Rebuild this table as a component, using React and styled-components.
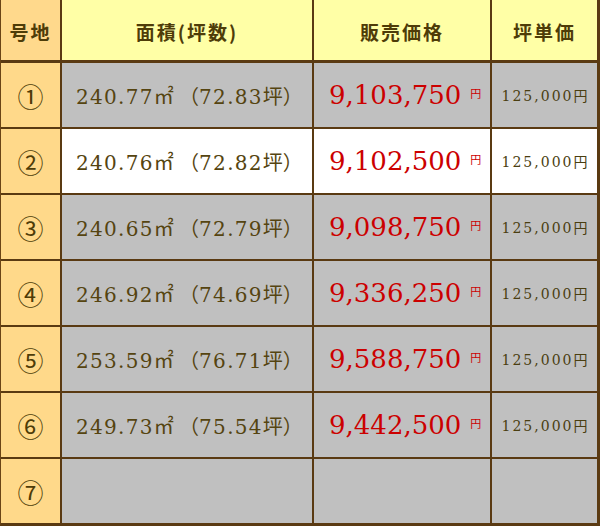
import styled, { createGlobalStyle } from "styled-components";

const GlobalStyle = createGlobalStyle`
  html, body {
    margin: 0;
    padding: 0;
    background: #ffffff;
  }
  body {
    font-family: "DejaVu Serif", "Noto Sans CJK JP", serif;
  }
`;

// 表全体（茶色の罫線は背景色と gap で出す）
const Table = styled.div`
  display: grid;
  grid-template-columns: 59px 250px 176px 105px;
  grid-template-rows: 61px repeat(7, 64px);
  column-gap: 2px;
  row-gap: 2px;
  width: 600px;
  box-sizing: border-box;
  background: #5a3a12;
  border-left: 1px solid #6a4416;
  border-right: 3px solid #5a3a12;
  border-bottom: 3px solid #5a3a12;
`;

// 見出しセル
const HeadCell = styled.div`
  height: 60px;
  display: flex;
  align-items: center;
  justify-content: center;
  background: ${(p) => (p.$lot ? "#ffd98c" : "#ffffa6")};
  color: #4e3c08;
  font-family: "Noto Sans CJK JP", sans-serif;
  font-weight: 700;
  font-size: 19px;
  letter-spacing: 2px;
  padding-top: 2px;
  box-sizing: border-box;
`;

// 号地セル
const LotCell = styled.div`
  display: flex;
  align-items: center;
  justify-content: center;
  background: #ffd98a;
  color: #4e3c08;
  font-family: "Noto Sans CJK JP", sans-serif;
  font-size: 26px;
`;

// データセル
const Cell = styled.div`
  display: flex;
  align-items: center;
  justify-content: ${(p) => p.$align || "flex-start"};
  background: ${(p) => (p.$white ? "#ffffff" : "#c0c0c0")};
  box-sizing: border-box;
  padding: ${(p) => p.$pad || "0"};
  color: #554410;
`;

const AreaText = styled.span`
  font-family: "DejaVu Serif", "Noto Sans CJK JP", serif;
  font-size: 20px;
  letter-spacing: 1.3px;
  white-space: nowrap;
`;

const Tsubo = styled.span`
  font-family: "Noto Sans CJK JP", sans-serif;
  font-size: 20px;
  letter-spacing: 0;
  margin-left: ${(p) => p.$gap || "0"};
`;

const Price = styled.span`
  font-family: "DejaVu Serif", serif;
  font-size: 26px;
  letter-spacing: 0;
  color: #cc0000;
  white-space: nowrap;
`;

const Yen = styled.span`
  font-family: "Noto Sans CJK JP", sans-serif;
  font-size: 11px;
  color: #cc0000;
  margin-left: 9px;
  position: relative;
  top: -2px;
`;

const UnitPrice = styled.span`
  font-family: "DejaVu Serif", "Noto Sans CJK JP", serif;
  font-size: 14px;
  letter-spacing: 2px;
  color: #4a3e10;
  white-space: nowrap;
`;

const UnitYen = styled.span`
  font-family: "Noto Sans CJK JP", sans-serif;
  font-size: 14px;
  letter-spacing: 0;
`;

const rows = [
  { no: "①", m2: "240.77", tsubo: "72.83", price: "9,103,750", unit: "125,000" },
  { no: "②", m2: "240.76", tsubo: "72.82", price: "9,102,500", unit: "125,000", white: true },
  { no: "③", m2: "240.65", tsubo: "72.79", price: "9,098,750", unit: "125,000" },
  { no: "④", m2: "246.92", tsubo: "74.69", price: "9,336,250", unit: "125,000" },
  { no: "⑤", m2: "253.59", tsubo: "76.71", price: "9,588,750", unit: "125,000" },
  { no: "⑥", m2: "249.73", tsubo: "75.54", price: "9,442,500", unit: "125,000" },
  { no: "⑦" },
];

const App = () => {
  return (
    <>
      <GlobalStyle />
      <Table>
        <HeadCell $lot>号地</HeadCell>
        <HeadCell>面積(坪数)</HeadCell>
        <HeadCell>販売価格</HeadCell>
        <HeadCell>坪単価</HeadCell>
        {rows.map((r) => (
          <Row key={r.no} r={r} />
        ))}
      </Table>
    </>
  );
};

const Row = ({ r }) => (
  <>
    <LotCell>{r.no}</LotCell>
    <Cell $white={r.white} $pad="0 0 0 14px">
      {r.m2 && (
        <AreaText>
          {r.m2}㎡<Tsubo $gap="4px">（</Tsubo>
          {r.tsubo}
          <Tsubo>坪）</Tsubo>
        </AreaText>
      )}
    </Cell>
    <Cell $white={r.white} $pad="0 0 0 15px">
      {r.price && (
        <>
          <Price>{r.price}</Price>
          <Yen>円</Yen>
        </>
      )}
    </Cell>
    <Cell $white={r.white} $align="center">
      {r.unit && (
        <UnitPrice>
          {r.unit}
          <UnitYen>円</UnitYen>
        </UnitPrice>
      )}
    </Cell>
  </>
);

export default App;
